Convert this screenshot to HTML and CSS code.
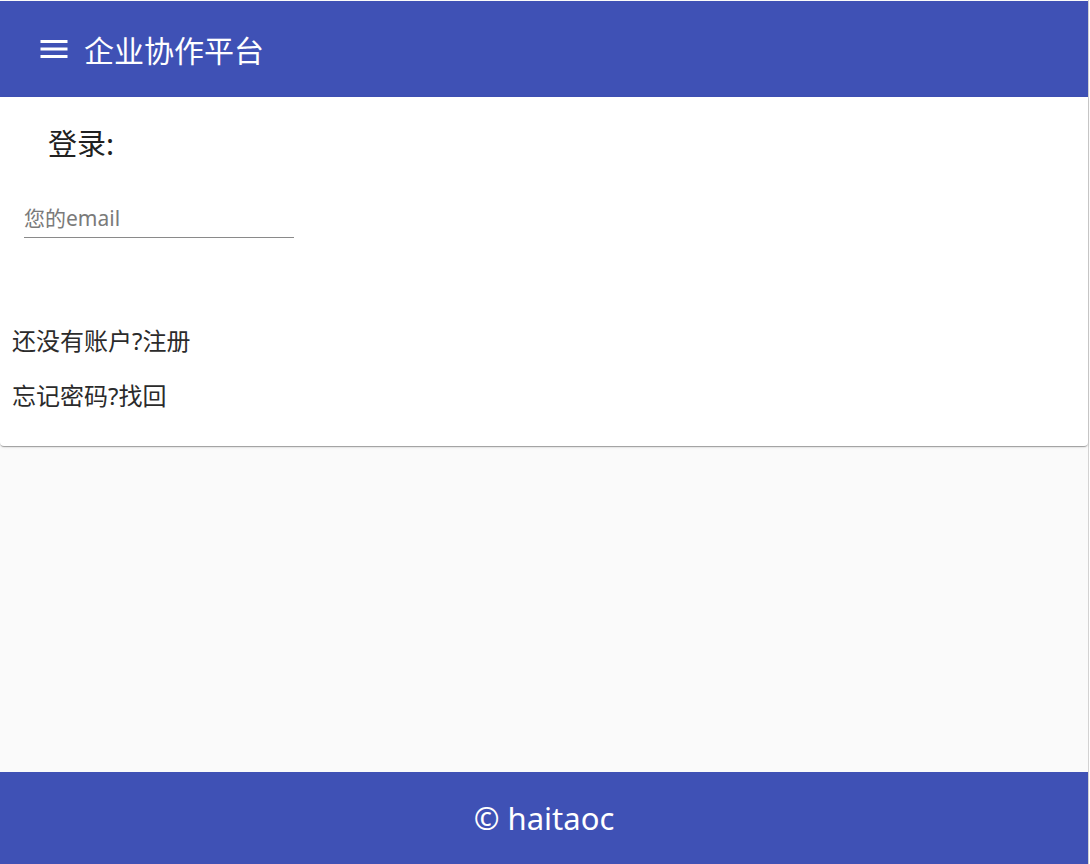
FILE: index.html
```html
<!DOCTYPE html>
<html lang="zh">
<head>
<meta charset="utf-8">
<title>企业协作平台</title>
<link rel="stylesheet" href="styles.css">
</head>
<body>
<div class="page">
  <header class="toolbar">
    <svg class="menu-icon" viewBox="0 0 24 24" width="36" height="36" aria-hidden="true">
      <path fill="#fff" d="M3 18h18v-2H3v2zm0-5h18v-2H3v2zm0-7v2h18V6H3z"/>
    </svg>
    <span class="toolbar-title">企业协作平台</span>
  </header>
  <main class="card">
    <div class="card-title">登录:</div>
    <div class="field">
      <input class="field-input" type="email" placeholder="您的email">
    </div>
    <a class="card-link first">还没有账户?注册</a>
    <a class="card-link">忘记密码?找回</a>
  </main>
  <div class="spacer"></div>
  <footer class="footer">© haitaoc</footer>
</div>
</body>
</html>
```

FILE: styles.css
```css
html, body {
  margin: 0;
  padding: 0;
  background: #ffffff;
}

body {
  font-family: "Noto Sans", "Noto Sans CJK SC", sans-serif;
}

.page {
  width: 1089px;
  height: 864px;
  box-sizing: border-box;
  padding-top: 1px;
  border-right: 1px solid #d2d2d2;
  background: #fafafa;
  display: flex;
  flex-direction: column;
}

.toolbar {
  height: 96px;
  flex: none;
  background: #3f51b5;
  color: #fff;
  display: flex;
  align-items: center;
  padding-left: 36px;
  gap: 12px;
}

.menu-icon {
  display: block;
  flex: none;
}

.toolbar-title {
  font-family: "Noto Sans CJK SC", sans-serif;
  font-size: 30px;
  line-height: 36px;
  font-weight: 400;
}

.card {
  background: #fff;
  border-radius: 0 0 4px 4px;
  box-shadow: 0 2px 1px -1px rgba(0,0,0,.2), 0 1px 1px 0 rgba(0,0,0,.14), 0 1px 3px 0 rgba(0,0,0,.12);
  padding: 29px 0 35px;
  display: flex;
  flex-direction: column;
  align-items: flex-start;
  flex: none;
}

.card-title {
  margin-left: 48px;
  font-family: "Noto Sans CJK SC", sans-serif;
  font-size: 29px;
  line-height: 32px;
  color: #212121;
}

.field {
  margin: 48px 0 0 24px;
  width: 270px;
  border-bottom: 1px solid #8a8a8a;
  padding-bottom: 7px;
}

.field-input {
  display: block;
  width: 100%;
  border: 0;
  outline: none;
  padding: 0;
  margin: 0;
  background: transparent;
  font-family: "Noto Sans", "Noto Sans CJK SC", sans-serif;
  font-size: 21px;
  line-height: 24px;
  height: 24px;
  color: #212121;
}

.field-input::placeholder {
  color: #7a7a7a;
}

.card-link {
  margin-left: 12px;
  margin-top: 25px;
  font-family: "Noto Sans", "Noto Sans CJK SC", sans-serif;
  font-size: 24px;
  line-height: 30px;
  color: #2b2b2b;
  cursor: pointer;
}

.card-link.first {
  margin-top: 88px;
}

.spacer {
  flex: 1;
}

.footer {
  height: 92px;
  flex: none;
  background: #3f51b5;
  color: #fff;
  display: flex;
  align-items: center;
  justify-content: center;
  font-size: 31px;
}
```
